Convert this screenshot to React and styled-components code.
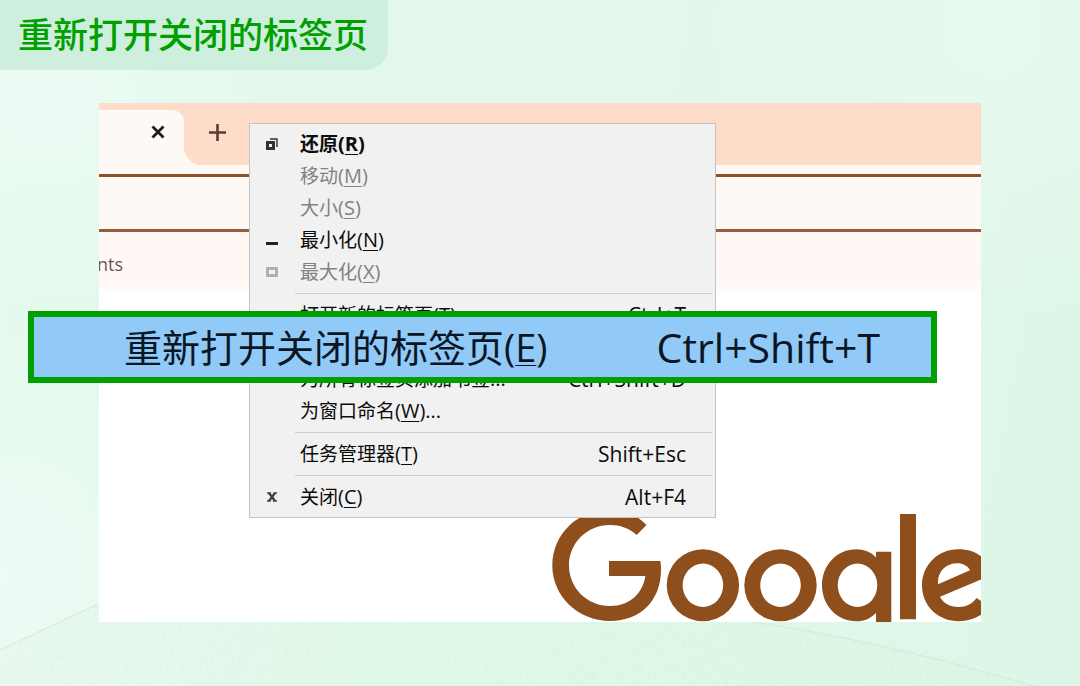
import React from "react"
import styled, { createGlobalStyle, css } from "styled-components"

const GlobalStyle = createGlobalStyle`
  *,
  *::before,
  *::after {
    box-sizing: border-box;
  }

  body {
    margin: 0;
    font-family: "Open Sans", "Noto Sans CJK SC", sans-serif;
  }

  button {
    border: none;
    background: none;
    padding: 0;
    font: inherit;
    color: inherit;
  }
`

const Page = styled.main`
  position: relative;
  display: flex;
  flex-direction: column;
  align-items: flex-start;
  gap: 33px;
  min-height: 100vh;
  padding-bottom: 64px;
  overflow: hidden;
  background:
    radial-gradient(circle at 4% 14%, #ecfbf4 0, rgba(236, 251, 244, 0) 220px),
    radial-gradient(circle at 0% 84%, #edfbf5 0, rgba(237, 251, 245, 0) 260px),
    radial-gradient(circle at 92% 4%, #e8f9f0 0, rgba(232, 249, 240, 0) 300px),
    linear-gradient(100deg, #e5f9ed 0%, #e2f8ea 50%, #ddf6e7 100%);
`

const Hills = styled.svg`
  position: absolute;
  left: 0;
  bottom: 0;
  width: 100%;
  height: 90px;
`

const Title = styled.h1`
  position: relative;
  margin: 0;
  height: 70px;
  padding: 0 20px 0 18px;
  border-bottom-right-radius: 22px;
  background: #cfefde;
  color: #00a000;
  font-family: "Noto Sans CJK SC", sans-serif;
  font-size: 35px;
  font-weight: 500;
  line-height: 66px;
`

const Stage = styled.section`
  position: relative;
  display: flex;
  flex: 1;
  align-self: stretch;
  margin: 0 99px;
`

const Browser = styled.div`
  position: relative;
  display: flex;
  flex: 1;
  flex-direction: column;
  min-width: 0;
  overflow: hidden;
  background: #fff;
`

const TabStrip = styled.div`
  display: flex;
  height: 62px;
  background: #fff9f6;
`

const TabSlot = styled.div`
  width: 85px;
  padding-top: 7px;
  background: linear-gradient(#ffdcc9 50%, #fff9f6 50%);
`

const Tab = styled.div`
  display: flex;
  align-items: flex-start;
  justify-content: flex-end;
  height: 100%;
  padding: 15px 19px;
  border-top-right-radius: 12px;
  background: #fff9f6;
`

const StripRest = styled.div`
  flex: 1;
  padding: 21px 25px;
  border-bottom-left-radius: 18px;
  background: #ffdcc9;
`

const IconButton = styled.button`
  display: flex;
  color: ${props => props.$color};
`

const Toolbar = styled.div`
  height: 67px;
  padding-top: 9px;
  background: #fff9f6;

  &::before {
    content: "";
    display: block;
    height: 3px;
    background: #8a5428;
  }

  &::after {
    content: "";
    display: block;
    height: 3px;
    margin-top: 52px;
    background: #966040;
  }
`

const Bookmarks = styled.div`
  display: flex;
  align-items: center;
  height: 64px;
  background: linear-gradient(#fff8f4 50px, #fff);
`

const Bookmark = styled.a`
  display: flex;
  justify-content: flex-end;
  width: 24px;
  overflow: hidden;
  color: #5f5752;
  font-size: 18px;
  line-height: 24px;
  text-decoration: none;
`

const Logo = styled.svg`
  align-self: flex-end;
  margin-top: auto;
`

const Menu = styled.div`
  position: absolute;
  top: 20px;
  left: 150px;
  width: 467px;
  padding: 4px 0;
  border: 1px solid #c4c4c4;
  background: #f1f1f1;
`

const MenuItem = styled.button`
  display: grid;
  grid-template-columns: 44px 1fr auto;
  align-items: center;
  width: 100%;
  height: 32px;
  padding-right: 29px;
  color: #0c0c0c;
  font-size: 19px;
  line-height: 32px;
  text-align: left;

  ${props => props.$strong && css`
    font-weight: 700;
  `}

  &:disabled {
    color: #828282;
  }
`

const LiftedSlot = styled.div`
  height: 32px;
`

const MenuIcon = styled.span`
  display: flex;
  justify-content: center;
`

const Label = styled.span`
  padding-left: 6px;
  white-space: nowrap;
`

const Suffix = styled.span`
  font-size: ${props => props.$size};
`

const AccessKey = styled.span`
  text-decoration: underline;
  text-decoration-thickness: 1px;
  text-underline-offset: 3px;
`

const Shortcut = styled.span`
  font-size: ${props => props.$size};
`

const Separator = styled.hr`
  height: 1px;
  margin: 5px 3px 5px 45px;
  border: none;
  background: #cfcfcf;
`

const Callout = styled.div`
  position: absolute;
  top: 208px;
  right: 44px;
  left: -71px;
  display: flex;
  align-items: center;
  justify-content: space-between;
  height: 72px;
  padding: 0 51px 0 90px;
  border: 6px solid #00a000;
  background: #91c9f7;
  color: #0a1624;
  font-size: 38px;
  line-height: 60px;
  white-space: nowrap;
`

const icons = {
  restore: (
    <svg width="12" height="12" viewBox="0 0 12 12" fill="none" stroke="#333">
      <path d="M4 1h7v8" strokeWidth="1.4" />
      <path d="M1.5 4.5h6v6h-6z" strokeWidth="3" />
    </svg>
  ),
  minimize: (
    <svg width="12" height="12" viewBox="0 0 12 12">
      <path d="M0 8h12v3H0z" fill="#222" />
    </svg>
  ),
  maximize: (
    <svg width="12" height="10" viewBox="0 0 12 10">
      <path d="M1.5 1.5h9v7h-9z" fill="none" stroke="#b0b0b0" strokeWidth="3" />
    </svg>
  ),
  close: (
    <svg width="12" height="10" viewBox="0 0 12 10" fill="none" stroke="#444">
      <path d="M3 1l6 8M9 1L3 9" strokeWidth="2.4" />
      <path d="M1 1h4M7.500 1h3.500M1 9h3.500M7 9h4" strokeWidth="1.600" />
    </svg>
  ),
}

const reopenTab = {
  text: "重新打开关闭的标签页",
  accessKey: "E",
  shortcut: "Ctrl+Shift+T",
  lifted: true,
}

const groups = [
  [
    { text: "还原", accessKey: "R", icon: "restore", strong: true },
    { text: "移动", accessKey: "M", disabled: true },
    { text: "大小", accessKey: "S", disabled: true },
    { text: "最小化", accessKey: "N", icon: "minimize" },
    { text: "最大化", accessKey: "X", icon: "maximize", disabled: true },
  ],
  [
    { text: "打开新的标签页", accessKey: "T", shortcut: "Ctrl+T" },
    reopenTab,
    { text: "为所有标签页添加书签", after: "...", shortcut: "Ctrl+Shift+D" },
    { text: "为窗口命名", accessKey: "W", after: "..." },
  ],
  [{ text: "任务管理器", accessKey: "T", shortcut: "Shift+Esc" }],
  [{ text: "关闭", accessKey: "C", icon: "close", shortcut: "Alt+F4" }],
]

function ItemText({ text, accessKey, after, suffixSize }) {
  return (
    <>
      {text}
      <Suffix $size={suffixSize}>
        {accessKey && (
          <>
            (<AccessKey>{accessKey}</AccessKey>)
          </>
        )}
        {after}
      </Suffix>
    </>
  )
}

function Item({ item }) {
  // the lifted item is shown enlarged in the callout, its row stays empty
  if (item.lifted) return <LiftedSlot />

  return (
    <MenuItem
      type="button"
      role="menuitem"
      disabled={item.disabled}
      $strong={item.strong}
    >
      <MenuIcon>{icons[item.icon]}</MenuIcon>
      <Label>
        <ItemText {...item} suffixSize="20px" />
      </Label>
      <Shortcut $size="21px">{item.shortcut}</Shortcut>
    </MenuItem>
  )
}

function ContextMenu() {
  return (
    <Menu role="menu">
      {groups.map((items, index) => (
        <React.Fragment key={index}>
          {index > 0 && <Separator />}
          {items.map(item => (
            <Item key={item.text} item={item} />
          ))}
        </React.Fragment>
      ))}
    </Menu>
  )
}

function GoogleLogo() {
  return (
    <Logo
      width="429"
      height="113"
      viewBox="552 509 429 113"
      fill="#8f4f1d"
      fillRule="evenodd"
      role="img"
      aria-label="Google"
    >
      <path d="M646.500 525L636.700 535C629 528 620 525 610 525C587 525 569 543 569 565.500C569 588 587 606 610 606C630 606 643 593 645.300 576H609V561H660.300C661 564 661 567 661 570C661 600 641 621 610 621C578 621 552.300 596 552.300 565.500C552.300 534 578 509.500 610 509.500C624 509.500 637 515 646.500 525Z" />
      <path d="M666.700 585.300a36.200 36 0 1 0 72.400 0a36.200 36 0 1 0-72.400 0zM682.600 585.300a20.300 21.700 0 1 1 40.600 0a20.300 21.700 0 1 1-40.600 0z" />
      <path d="M744.300 585.300a36.200 36 0 1 0 72.400 0a36.200 36 0 1 0-72.400 0zM760.200 585.300a20.300 21.700 0 1 1 40.600 0a20.300 21.700 0 1 1-40.600 0z" />
      <path d="M876 551.700H891.300V623H876V613C870 619 864 621.300 856.500 621.300C837 621.300 822 605.500 822 585.300C822 565 837 549.300 856.500 549.300C864 549.300 871 552 876 557.500ZM837.700 585.300a19.800 21.700 0 1 0 39.600 0a19.800 21.700 0 1 0-39.600 0z" />
      <path d="M900 514h16v105.300h-16z" />
      <path d="M940 596.700L993 574.500C989 560 977 549.300 958.500 549.300C938 549.300 922 565 922 585.300C922 606 938 621.300 959 621.300C971 621.300 982 616 990 607L976.700 598C972 604 966 607 958.500 607C950 607 943 603 940 596.700ZM938 584.300C937 572 946 563.300 957 563.300C963 563.300 968 566 970 570.300Z" />
    </Logo>
  )
}

export default function App() {
  return (
    <Page>
      <GlobalStyle />
      <Hills viewBox="0 0 1080 90" preserveAspectRatio="none" aria-hidden="true">
        <defs>
          <linearGradient id="hill">
            <stop offset="0" stopColor="#e8f8ee" />
            <stop offset="0.35" stopColor="#e0f8e8" />
            <stop offset="1" stopColor="#dcf6e6" />
          </linearGradient>
          <filter id="grain" x="0" y="0" width="100%" height="100%">
            <feTurbulence type="fractalNoise" baseFrequency="0.35 0.12" numOctaves="3" seed="4" />
            <feColorMatrix values="0 0 0 0 0.45 0 0 0 0 0.6 0 0 0 0 0.5 0 0 0 1.6 -0.8" />
            <feComposite in2="SourceGraphic" operator="in" />
          </filter>
        </defs>
        <path d="M0 54L98 8L300 0H660Q820 32 1034 90H0z" fill="url(#hill)" />
        <path d="M0 54L98 8L300 0H660Q820 32 1034 90H0z" filter="url(#grain)" opacity="0.15" />
        <path d="M0 54L98 8M660 14Q840 32 1034 90" fill="none" stroke="#d0e9da" />
      </Hills>

      <Title>重新打开关闭的标签页</Title>

      <Stage>
        <Browser>
          <TabStrip>
            <TabSlot>
              <Tab>
                <IconButton type="button" aria-label="关闭标签页" $color="#1f1a18">
                  <svg width="14" height="14" viewBox="0 0 14 14">
                    <path d="M1.500 1.500l11 11M12.500 1.500l-11 11" stroke="currentColor" strokeWidth="2.800" />
                  </svg>
                </IconButton>
              </Tab>
            </TabSlot>
            <StripRest>
              <IconButton type="button" aria-label="新标签页" $color="#5a3c30">
                <svg width="17" height="17" viewBox="0 0 17 17">
                  <path d="M8.500 0v17M0 8.500h17" stroke="currentColor" strokeWidth="2.600" />
                </svg>
              </IconButton>
            </StripRest>
          </TabStrip>
          <Toolbar />
          <Bookmarks>
            <Bookmark href="#">nts</Bookmark>
          </Bookmarks>
          <GoogleLogo />
        </Browser>

        <ContextMenu />

        <Callout>
          <span>
            <ItemText {...reopenTab} suffixSize="38px" />
          </span>
          <Shortcut $size="41px">{reopenTab.shortcut}</Shortcut>
        </Callout>
      </Stage>
    </Page>
  )
}
